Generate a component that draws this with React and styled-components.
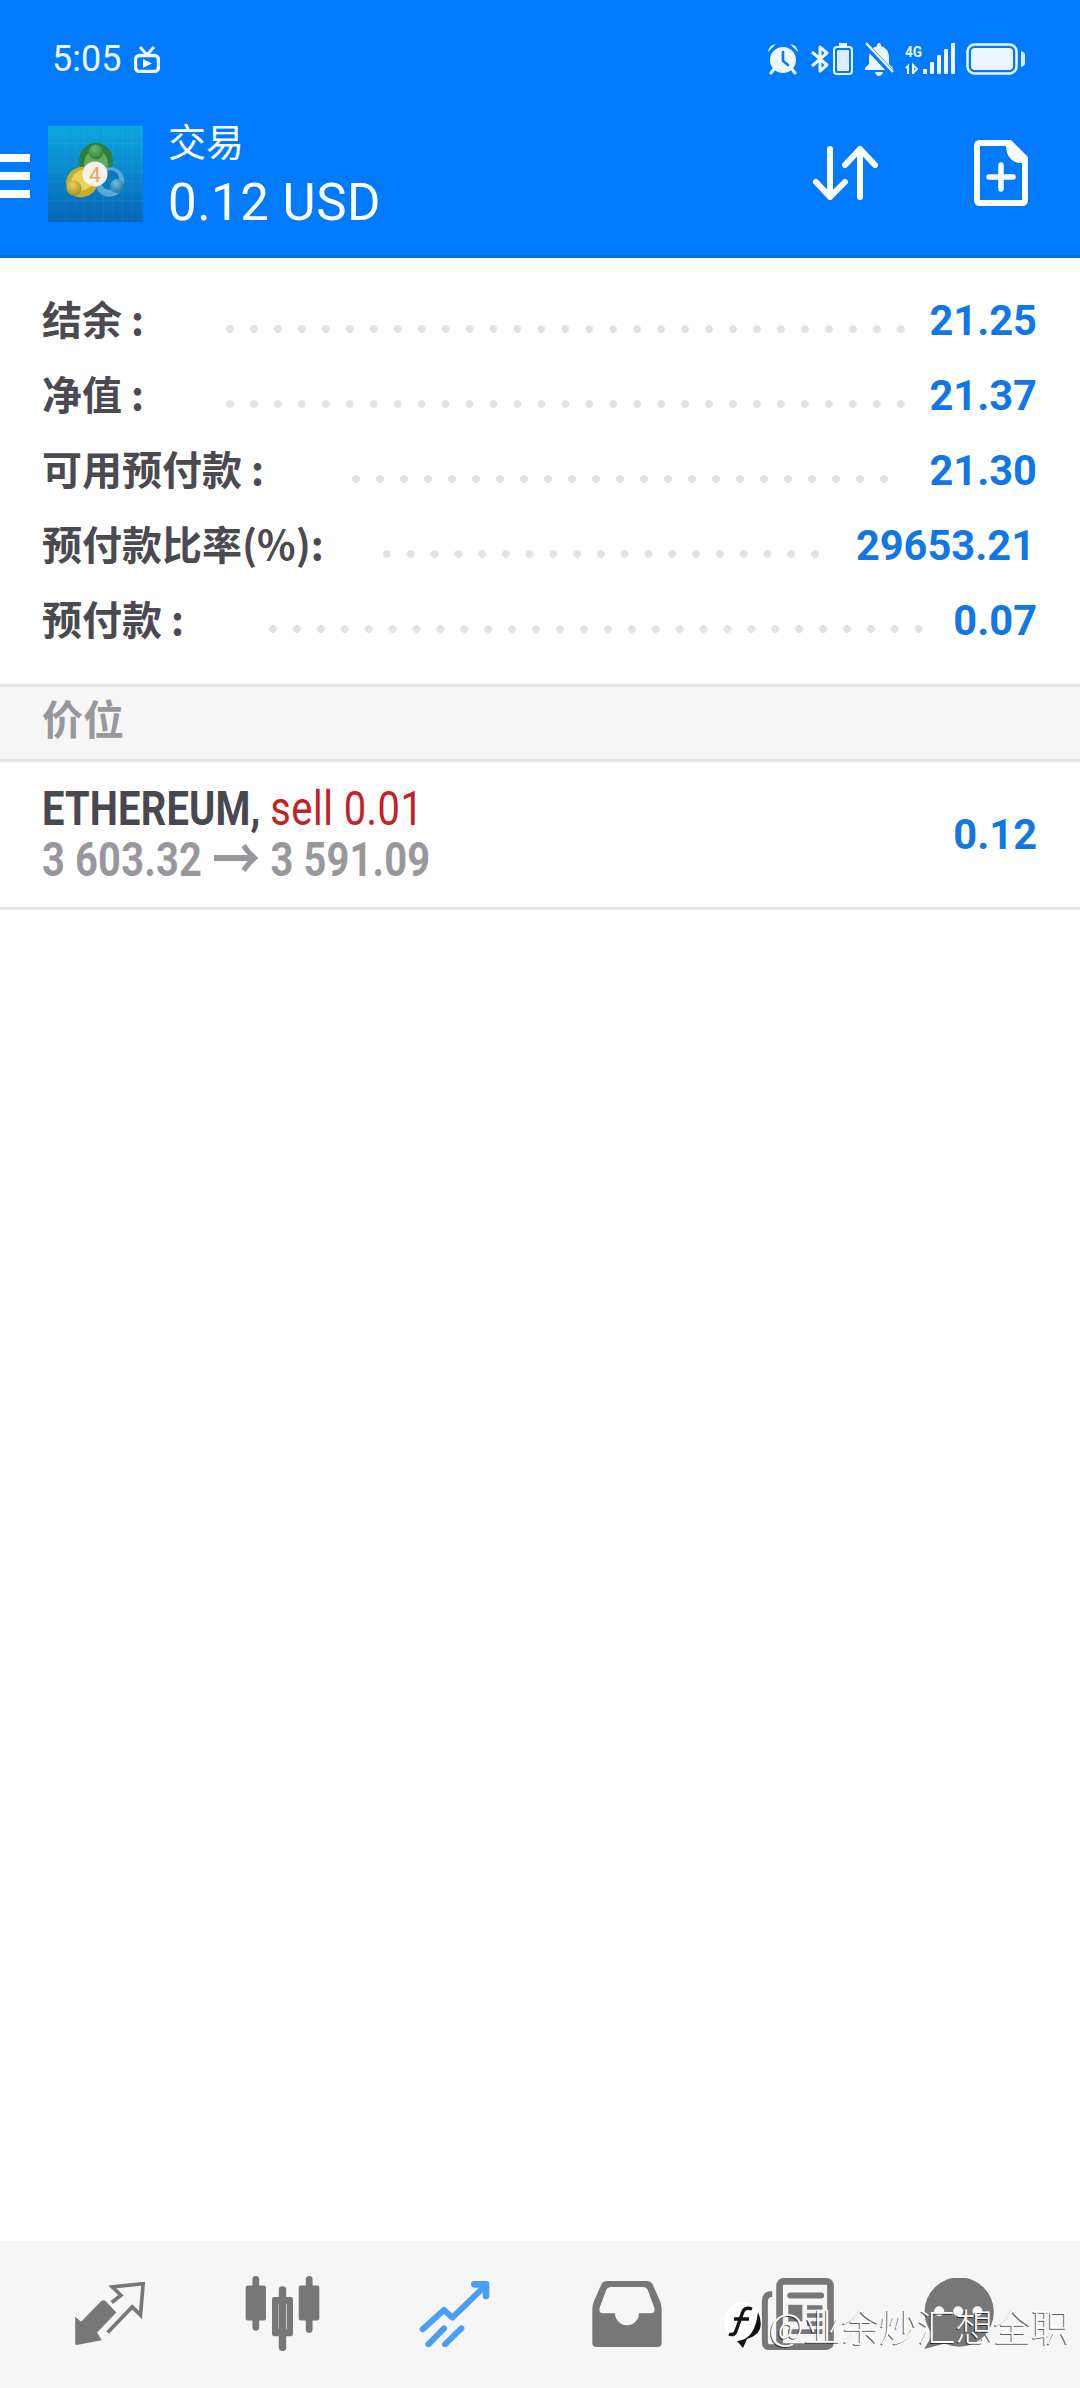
import React from "react";
import styled, { createGlobalStyle } from "styled-components";

const GlobalStyle = createGlobalStyle`
   html, body {
      margin: 0;
      padding: 0;
      background: #ffffff;
   }
   * {
      box-sizing: border-box;
   }
`;

const rows = [
   { label: "结余 :", value: "21.25", left: 74, right: 16 },
   { label: "净值 :", value: "21.37", left: 74, right: 16 },
   { label: "可用预付款 :", value: "21.30", left: 80, right: 33 },
   { label: "预付款比率(%):", value: "29653.21", left: 51, right: 29, shift: 2 },
   { label: "预付款 :", value: "0.07", left: 77, right: 22 },
];

function AlarmIcon() {
   return (
      <StatusSvg width="32" height="32" viewBox="0 0 32 32">
         <circle cx="16" cy="17" r="13" fill="#eef7ff" />
         <path d="M16 9v9l5 4" fill="none" stroke="#007aff" strokeWidth="2.6" strokeLinecap="round" />
         <path d="M1 9Q2 2 9 1ZM31 9Q30 2 23 1Z" fill="#eef7ff" />
         <path d="M7 26l-3 4M25 26l3 4" stroke="#eef7ff" strokeWidth="3" strokeLinecap="round" />
      </StatusSvg>
   );
}

function BluetoothIcon() {
   return (
      <StatusSvg width="20" height="30" viewBox="0 0 20 30">
         <path d="M2 8l15 13-7 6V3l7 6L2 22" fill="none" stroke="#eef7ff" strokeWidth="3" strokeLinejoin="round" />
      </StatusSvg>
   );
}

function SmallBatteryIcon() {
   return (
      <StatusSvg width="20" height="32" viewBox="0 0 20 32">
         <rect x="6" y="0" width="8" height="3" fill="#eef7ff" />
         <rect x="1" y="4" width="18" height="27" rx="3" fill="none" stroke="#eef7ff" strokeWidth="2" />
         <rect x="4" y="7" width="12" height="21" rx="1" fill="#dcefff" />
      </StatusSvg>
   );
}

function BellOffIcon() {
   return (
      <StatusSvg width="30" height="34" viewBox="0 0 30 34">
         <path d="M15 1q2 0 2 3q7 2 8 10v8l4 4v2H1v-2l4-4v-8q1-8 8-10q0-3 2-3zM11 30h8q-1 4-4 4t-4-4z" fill="#eef7ff" />
         <path d="M1 2l27 29" stroke="#007aff" strokeWidth="6" />
         <path d="M2 1l27 29" stroke="#eef7ff" strokeWidth="2.4" />
      </StatusSvg>
   );
}

function SignalIcon() {
   return (
      <StatusSvg width="50" height="32" viewBox="0 0 50 32">
         <text x="0" y="14" fontFamily="Roboto, sans-serif" fontWeight="700" fontSize="15" fill="#eef7ff" textLength="17" lengthAdjust="spacingAndGlyphs">4G</text>
         <path d="M3 31V23L1 25M8 31V22l4 4-4 4" fill="none" stroke="#eef7ff" strokeWidth="2" />
         <rect x="18" y="26" width="4" height="5" fill="#eef7ff" />
         <rect x="25" y="19" width="4" height="12" rx="1" fill="#eef7ff" />
         <rect x="32" y="12" width="4" height="19" rx="1" fill="#eef7ff" />
         <rect x="39" y="6" width="4" height="25" rx="1" fill="#eef7ff" />
         <rect x="46" y="0" width="4" height="31" rx="1" fill="#eef7ff" />
      </StatusSvg>
   );
}

function BatteryIcon() {
   return (
      <StatusSvg width="60" height="32" viewBox="0 0 60 32">
         <rect x="1.5" y="1.5" width="49" height="29" rx="7" fill="none" stroke="#eef7ff" strokeWidth="2.5" />
         <rect x="5" y="5" width="42" height="22" rx="4" fill="#eef7ff" />
         <path d="M55 8q4 1 4 4v8q0 3-4 4z" fill="#d8ecff" />
      </StatusSvg>
   );
}

function AppLogo() {
   const grid = [];
   for (let i = 8; i < 95; i += 9.5) {
      grid.push(<path key={i} d={`M${i} 0V96M0 ${i}H95`} stroke="#ffffff" strokeOpacity="0.06" strokeWidth="0.8" />);
   }
   return (
      <LogoSvg width="95" height="96" viewBox="0 0 95 96">
         <defs>
            <linearGradient id="logoBg" x1="0" y1="0" x2="0" y2="1">
               <stop offset="0" stopColor="#0ba6dd" />
               <stop offset="0.5" stopColor="#0a86cc" />
               <stop offset="1" stopColor="#0664b6" />
            </linearGradient>
            <radialGradient id="ballG" cx="0.4" cy="0.3" r="0.8">
               <stop offset="0" stopColor="#6fb866" />
               <stop offset="1" stopColor="#257a35" />
            </radialGradient>
            <radialGradient id="ballY" cx="0.4" cy="0.3" r="0.8">
               <stop offset="0" stopColor="#e2d35c" />
               <stop offset="1" stopColor="#a08a18" />
            </radialGradient>
            <radialGradient id="ballB" cx="0.4" cy="0.3" r="0.8">
               <stop offset="0" stopColor="#72bde0" />
               <stop offset="1" stopColor="#1c6a9f" />
            </radialGradient>
         </defs>
         <rect width="95" height="96" fill="url(#logoBg)" />
         {grid}
         <ellipse cx="48" cy="35" rx="17" ry="18" fill="#2c7f3f" />
         <ellipse cx="48" cy="38" rx="12" ry="14" fill="#63a95f" />
         <ellipse cx="62" cy="56" rx="14" ry="15" fill="#58a9dc" transform="rotate(25 62 56)" />
         <ellipse cx="62" cy="54" rx="9" ry="10" fill="#0f78bf" transform="rotate(25 62 54)" />
         <ellipse cx="34" cy="56" rx="16" ry="15" fill="#c4ae2c" transform="rotate(-25 34 56)" />
         <ellipse cx="35" cy="54" rx="12" ry="10" fill="#e6d358" transform="rotate(-25 35 54)" />
         <circle cx="48" cy="26" r="7.5" fill="url(#ballG)" />
         <circle cx="26" cy="62" r="7.5" fill="url(#ballY)" />
         <circle cx="69" cy="60" r="7" fill="url(#ballB)" />
         <circle cx="47" cy="48" r="12.5" fill="#f5f1ea" />
         <text x="47" y="55.5" textAnchor="middle" fontFamily="Roboto, sans-serif" fontSize="21" fill="#eda45c">4</text>
      </LogoSvg>
   );
}

function SortIcon() {
   return (
      <svg width="66" height="56" viewBox="0 0 66 56" fill="none" stroke="#ffffff" strokeWidth="6" strokeLinecap="round" strokeLinejoin="round">
         <path d="M18 4V52M4 37L18 52L33 37" />
         <path d="M48 52V4M33 20L48 4L63 20" />
      </svg>
   );
}

function NewFileIcon() {
   return (
      <svg width="54" height="66" viewBox="0 0 54 66">
         <path
            fillRule="evenodd"
            fill="#ffffff"
            d="M6 0H37L54 17V60Q54 66 48 66H6Q0 66 0 60V6Q0 0 6 0ZM6 6V60H48V23Q33 23 32 6Z"
         />
         <path d="M15 37H39M27 25V49" stroke="#ffffff" strokeWidth="5.5" strokeLinecap="round" />
      </svg>
   );
}

function QuotesIcon() {
   return (
      <svg width="72" height="63" viewBox="0 0 210 190" fill="#777777">
         <path d="M0 105L18 120L78 58Q85 52 92 58L124 92L66 152L80 176L4 190Q0 190 0 184Z" />
         <path d="M110 62L138 40L112 15L205 5L197 100L172 75L98 152" fill="none" stroke="#777777" strokeWidth="11" />
      </svg>
   );
}

function ChartIcon() {
   return (
      <svg width="75" height="75" viewBox="0 0 218 222" fill="#777777">
         <rect x="20" y="0" width="20" height="162" rx="10" />
         <rect x="0" y="28" width="60" height="104" rx="6" />
         <rect x="98" y="30" width="22" height="192" rx="10" />
         <path fillRule="evenodd" d="M84 62H134Q140 62 140 68V172Q140 178 134 178H84Q78 178 78 172V68Q78 62 84 62ZM103 80Q97 80 97 86V154Q97 160 103 160H116Q122 160 122 154V86Q122 80 116 80Z" />
         <rect x="178" y="0" width="20" height="168" rx="10" />
         <rect x="157" y="28" width="61" height="104" rx="6" />
      </svg>
   );
}

function TradeIcon() {
   return (
      <svg width="71" height="66" viewBox="0 0 207 198" fill="none" stroke="#4a9ff5" strokeWidth="18" strokeLinecap="round" strokeLinejoin="round">
         <path d="M8 145L72 87L97 110L198 12" />
         <path d="M163 10H198V45" strokeWidth="20" />
         <path d="M25 190L72 142M75 190L124 142" />
      </svg>
   );
}

function HistoryIcon() {
   return (
      <svg width="72" height="66" viewBox="0 0 208 198">
         <path
            fillRule="evenodd"
            fill="#777777"
            d="M45 0H165Q175 0 180 8L203 60Q208 72 208 85V185Q208 198 195 198H13Q0 198 0 185V85Q0 72 5 60L28 8Q33 0 45 0ZM55 18H153Q162 18 166 26L186 80Q190 97 175 97H140A36 36 0 0 1 68 97H33Q18 97 22 80L42 26Q46 18 55 18Z"
         />
      </svg>
   );
}

function NewsIcon() {
   return (
      <svg width="74" height="72" viewBox="0 0 214 215" fill="none" stroke="#777777">
         <rect x="52" y="10" width="152" height="195" rx="12" strokeWidth="20" />
         <path d="M30 48Q8 48 8 70V190Q8 207 25 207H60" strokeWidth="18" />
         <path d="M84 52H176" strokeWidth="18" strokeLinecap="round" />
         <rect x="78" y="80" width="42" height="50" fill="#777777" stroke="none" />
         <path d="M134 88H180M134 112H180M134 136H180M78 160H180" strokeWidth="14" />
      </svg>
   );
}

function ChatIcon() {
   return (
      <svg width="72" height="71" viewBox="0 0 209 213" fill="#777777">
         <circle cx="105" cy="102" r="104" />
         <path d="M32 160L0 213L80 192Z" />
         <circle cx="45" cy="100" r="15" fill="#f6f6f6" />
         <circle cx="102" cy="100" r="15" fill="#f6f6f6" />
         <circle cx="160" cy="100" r="15" fill="#f6f6f6" />
      </svg>
   );
}

function WatermarkLogo() {
   return (
      <svg width="40" height="46" viewBox="0 0 40 46">
         <circle cx="19" cy="19" r="19" fill="#ffffff" />
         <path d="M34 10Q43 31 23 37L19 46L13 39Q31 38 34 10Z" fill="#111111" />
         <path d="M28 7Q20 4 18 12L12 29Q10 34 5 32M10 17H25" fill="none" stroke="#111111" strokeWidth="3.4" />
      </svg>
   );
}

function App() {
   return (
      <Page>
         <GlobalStyle />
         <Header>
            <StatusBar>
               <Clock>
                  <span>5:05</span>
                  <svg width="26" height="27" viewBox="0 0 26 27">
                     <path d="M6 1l7 8 7-8" fill="none" stroke="#eef7ff" strokeWidth="3" />
                     <rect x="1.5" y="9.5" width="23" height="16" rx="4" fill="none" stroke="#eef7ff" strokeWidth="3.4" />
                     <path d="M9 13l9 4.5-9 4.5z" fill="#eef7ff" />
                  </svg>
               </Clock>
               <StatusIcons>
                  <AlarmIcon />
                  <BluetoothGroup>
                     <BluetoothIcon />
                     <SmallBatteryIcon />
                  </BluetoothGroup>
                  <BellOffIcon />
                  <SignalIcon />
                  <BatteryIcon />
               </StatusIcons>
            </StatusBar>
            <AppBar>
               <Hamburger>
                  <span />
                  <span />
                  <span />
               </Hamburger>
               <AppLogo />
               <Titles>
                  <Title>交易</Title>
                  <Amount>0.12 USD</Amount>
               </Titles>
               <Actions>
                  <SortIcon />
                  <NewFileIcon />
               </Actions>
            </AppBar>
         </Header>

         <Summary>
            {rows.map((row) => (
               <Row key={row.label}>
                  <Label>{row.label}</Label>
                  <Leader $left={row.left} $right={row.right} />
                  <Value $shift={row.shift}>{row.value}</Value>
               </Row>
            ))}
         </Summary>

         <SectionTitle>价位</SectionTitle>

         <Position>
            <PositionText>
               <Line>
                  <Symbol>ETHEREUM,</Symbol> <Side>sell 0.01</Side>
               </Line>
               <Line>
                  <Prices>3 603.32 <Arrow>→</Arrow> 3 591.09</Prices>
               </Line>
            </PositionText>
            <Profit>0.12</Profit>
         </Position>

         <Spacer />

         <BottomNav>
            <NavItem $width={172}><QuotesIcon /></NavItem>
            <NavItem $width={172}><ChartIcon /></NavItem>
            <NavItem $width={172}><TradeIcon /></NavItem>
            <NavItem $width={173}><HistoryIcon /></NavItem>
            <NavItem $width={169}><NewsIcon /></NavItem>
            <NavItem $width={154}><ChatIcon /></NavItem>
         </BottomNav>

         <Watermark>
            <WatermarkLogo />
            <span>@业余炒汇想全职</span>
         </Watermark>
      </Page>
   );
}

export default App;

const Page = styled.div`
   position: relative;
   width: 1080px;
   height: 2388px;
   display: flex;
   flex-direction: column;
   overflow: hidden;
   background: #ffffff;
   font-family: Roboto, "Noto Sans CJK SC", sans-serif;
`;

const Header = styled.header`
   height: 258px;
   flex: none;
   background: #007aff;
   border-bottom: 3px solid #0a6fd6;
   color: #ffffff;
`;

const StatusBar = styled.div`
   height: 118px;
   display: flex;
   align-items: center;
   justify-content: space-between;
   padding: 0 54px 0 52px;
`;

const Clock = styled.div`
   display: flex;
   align-items: center;
   gap: 13px;
   font-size: 36px;
   color: #eef7ff;
`;

const StatusIcons = styled.div`
   display: flex;
   align-items: center;
   gap: 11px;
`;

const BluetoothGroup = styled.div`
   display: flex;
   align-items: center;
   gap: 3px;
`;

const StatusSvg = styled.svg`
   display: block;
`;

const LogoSvg = styled.svg`
   display: block;
   flex: none;
   margin: 8px 0 0 18px;
`;

const AppBar = styled.div`
   display: flex;
   align-items: flex-start;
   height: 137px;
`;

const Hamburger = styled.div`
   width: 30px;
   flex: none;
   display: flex;
   flex-direction: column;
   gap: 10px;
   margin-top: 36px;
   span {
      display: block;
      height: 8px;
      background: #ffffff;
   }
`;

const Titles = styled.div`
   display: flex;
   flex-direction: column;
   margin-left: 25px;
`;

const Title = styled.div`
   font-family: "Noto Sans CJK SC", sans-serif;
   font-size: 38px;
   line-height: 44px;
`;

const Amount = styled.div`
   font-size: 51px;
   line-height: 62px;
   margin-top: 10px;
   letter-spacing: 0.5px;
`;

const Actions = styled.div`
   margin-left: auto;
   display: flex;
   align-items: center;
   gap: 96px;
   padding: 22px 52px 0 0;
`;

const Summary = styled.section`
   flex: none;
   padding: 25px 0 25.5px;
   display: flex;
   flex-direction: column;
`;

const Row = styled.div`
   height: 75px;
   display: flex;
   align-items: center;
   padding: 0 43px 0 42px;
`;

const Label = styled.span`
   flex: none;
   margin-bottom: 6px;
   font-family: "Noto Sans CJK SC", sans-serif;
   font-weight: 700;
   font-size: 40px;
   color: #4a4a50;
   white-space: pre;
`;

const Leader = styled.span`
   flex: 1;
   height: 8px;
   margin: 16px ${(p) => p.$right}px 0 ${(p) => p.$left}px;
   background-image: radial-gradient(circle at center, #e2e2e2 3.5px, transparent 4.2px);
   background-size: 24px 8px;
   background-repeat: round no-repeat;
`;

const Value = styled.span`
   flex: none;
   font-weight: 700;
   font-size: 41.6px;
   color: #1176e6;
   margin-right: ${(p) => p.$shift || 0}px;
`;

const SectionTitle = styled.div`
   flex: none;
   height: 78px;
   display: flex;
   align-items: center;
   padding: 0 0 12px 42px;
   background: #f6f6f6;
   border-top: 3px solid #e5e5e5;
   border-bottom: 3px solid #e5e5e5;
   font-family: "Noto Sans CJK SC", sans-serif;
   font-weight: 700;
   font-size: 41px;
   line-height: 52px;
   color: #98989c;
`;

const Position = styled.div`
   flex: none;
   height: 148px;
   display: flex;
   align-items: center;
   justify-content: space-between;
   padding: 0 43px 0 42px;
   border-bottom: 3px solid #e5e5e5;
`;

const PositionText = styled.div`
   display: flex;
   flex-direction: column;
   transform: scaleX(0.83);
   transform-origin: left center;
   white-space: pre;
`;

const Line = styled.div`
   font-size: 48px;
   line-height: 51px;
`;

const Symbol = styled.span`
   display: inline-block;
   font-weight: 700;
   color: #48484e;
   letter-spacing: 0.2px;
`;

const Side = styled.span`
   display: inline-block;
   color: #c42126;
   letter-spacing: 0.6px;
`;

const Prices = styled.span`
   display: inline-block;
   font-weight: 700;
   color: #98989c;
   letter-spacing: 0.2px;
`;

const Arrow = styled.span`
   font-size: 58px;
   line-height: 0;
   vertical-align: -4px;
`;

const Profit = styled.span`
   font-weight: 700;
   font-size: 41.6px;
   color: #1176e6;
`;

const Spacer = styled.div`
   flex: 1;
`;

const BottomNav = styled.nav`
   flex: none;
   height: 147px;
   display: flex;
   align-items: center;
   padding: 0 0 2px 24px;
   background: #f6f6f6;
`;

const NavItem = styled.div`
   width: ${(p) => p.$width}px;
   flex: none;
   display: flex;
   justify-content: center;
`;

const Watermark = styled.div`
   position: absolute;
   left: 724px;
   top: 2302px;
   display: flex;
   align-items: flex-start;
   gap: 5px;
   font-family: "Noto Sans CJK SC", sans-serif;
   font-weight: 300;
   font-size: 38px;
   line-height: 46px;
   color: #ffffff;
   white-space: nowrap;
   text-shadow: -1px 1px 0 rgba(0, 0, 0, 0.65);
`;
